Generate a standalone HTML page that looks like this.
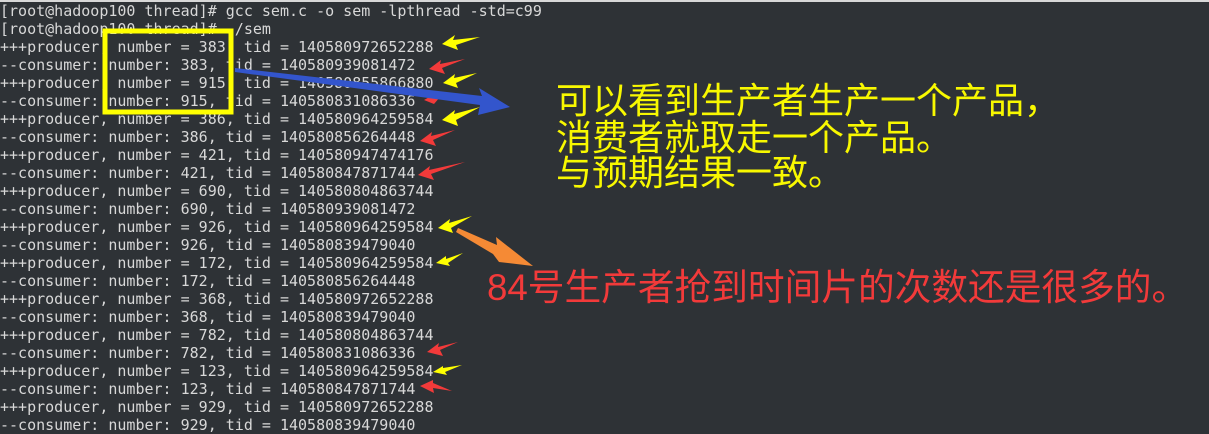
<!DOCTYPE html>
<html><head><meta charset="utf-8"><style>
html,body{margin:0;padding:0}
body{width:1209px;height:434px;background:#2e3236;position:relative;overflow:hidden}
.t{position:absolute;left:0;top:2px;font-family:"DejaVu Sans Mono","Liberation Mono",monospace;font-size:15px;line-height:18px;color:#d8d8d8;white-space:pre}
.y{position:absolute;left:556px;font-family:"Liberation Sans","Noto Sans CJK SC",sans-serif;font-size:36px;line-height:36px;color:#f8f800;white-space:pre}
.r{position:absolute;left:487px;top:268px;font-family:"Liberation Sans","Noto Sans CJK SC",sans-serif;font-size:36.7px;line-height:40px;color:#f23a3a;white-space:pre}
.top{position:absolute;left:0;top:0;width:1209px;height:2px;background:#d8d8d8}
svg{position:absolute;left:0;top:0}
</style></head><body>
<div class="top"></div>
<div class="t">[root@hadoop100 thread]# gcc sem.c -o sem -lpthread -std=c99
[root@hadoop100 thread]# ./sem
+++producer, number = 383, tid = 140580972652288
--consumer: number: 383, tid = 140580939081472
+++producer, number = 915, tid = 140580855866880
--consumer: number: 915, tid = 140580831086336
+++producer, number = 386, tid = 140580964259584
--consumer: number: 386, tid = 140580856264448
+++producer, number = 421, tid = 140580947474176
--consumer: number: 421, tid = 140580847871744
+++producer, number = 690, tid = 140580804863744
--consumer: number: 690, tid = 140580939081472
+++producer, number = 926, tid = 140580964259584
--consumer: number: 926, tid = 140580839479040
+++producer, number = 172, tid = 140580964259584
--consumer: number: 172, tid = 140580856264448
+++producer, number = 368, tid = 140580972652288
--consumer: number: 368, tid = 140580839479040
+++producer, number = 782, tid = 140580804863744
--consumer: number: 782, tid = 140580831086336
+++producer, number = 123, tid = 140580964259584
--consumer: number: 123, tid = 140580847871744
+++producer, number = 929, tid = 140580972652288
--consumer: number: 929, tid = 140580839479040</div>
<div class="y" style="top:83px">可以看到生产者生产一个产品，</div>
<div class="y" style="top:120px">消费者就取走一个产品。</div>
<div class="y" style="top:155px">与预期结果一致。</div>
<div class="r">84号生产者抢到时间片的次数还是很多的。</div>
<svg width="1209" height="434" viewBox="0 0 1209 434">
<rect x="105" y="31" width="126" height="81" fill="none" stroke="#ffff00" stroke-width="5"/>
<g fill="#ffff00">
<polygon points="442,44 455,35 453,40 480,37 456,45 458,50"/>
<polygon points="443,83 455,74 454,78 477,73 456,83 458,88"/>
<polygon points="442,120 455,110 454,114 480,107 456,120 458,126"/>
<polygon points="438,228 450,219 449,223 472,216 451,228 453,233"/>
<polygon points="436,263 446,256 446,259 463,253 448,263 450,266"/>
<polygon points="433,372 443,366 443,368 462,365 445,372 447,375"/>
</g>
<g fill="#f23a3a">
<polygon points="429,69 441,60 440,64 465,59 442,68 445,74"/>
<polygon points="420,141 432,132 431,136 455,130 433,140 436,146"/>
<polygon points="418,175 430,166 429,170 465,162 431,174 434,180"/>
<polygon points="427,352 439,343 438,347 458,342 440,350 443,356"/>
<polygon points="420,386 433,380 433,383 452,391 433,388 434,393"/>
<polygon points="424,100 433,95 433,98 440,97 434,104"/>
</g>
<polygon fill="#3355cc" points="235,68 482,96 479,88 510,107 478,115 480,105 235,72"/>
<polygon fill="#f58a35" points="458,228 497,245 496,237 533,266 499,262 493,254 456,232"/>
</svg>
</body></html>
